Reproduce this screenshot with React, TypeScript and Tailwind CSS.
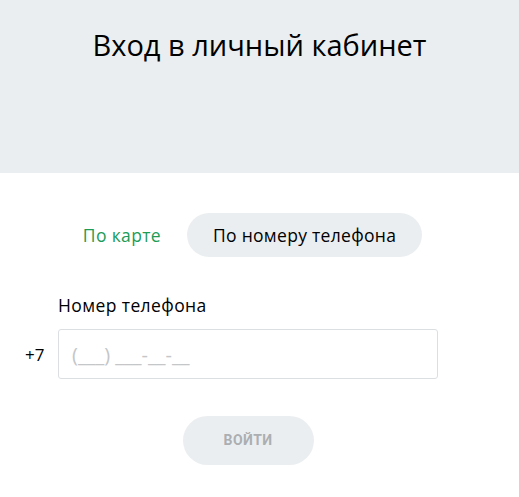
export default function App() {
  return (
    <div className="min-h-[497px] bg-white font-['Open_Sans',sans-serif] text-[#111]">
      {/* Header */}
      <header className="h-[173px] bg-[#ebeef0] pt-[25px] text-center">
        <h1 className="text-[29px] leading-[40px] font-normal text-black">Вход в личный кабинет</h1>
      </header>

      <div className="relative ml-[58px] w-[380px]">
        {/* Tabs */}
        <div className="mt-[40px] flex items-center justify-center gap-[26px] pl-[9px]">
          <button className="text-[17.5px] tracking-[0.35px] text-[#1c9c57]">По карте</button>
          <button className="h-[44px] rounded-full bg-[#ebeef0] px-[26px] text-[17.5px] tracking-[0.3px] text-black">
            По номеру телефона
          </button>
        </div>

        {/* Phone */}
        <label className="mt-[37px] block text-[17.5px] leading-[22px] tracking-[0.4px] text-black">Номер телефона</label>
        <div className="relative mt-[13px]">
          <span className="absolute left-[-33px] top-[13px] text-[17px] text-black">+7</span>
          <input
            type="text"
            placeholder="(___) ___-__-__"
            className="h-[50px] w-full rounded-[3px] border border-[#dcdfe2] px-[13px] text-[20px] outline-none placeholder:text-[#c4c6c8]"
          />
        </div>

        {/* Submit */}
        <div className="mt-[37px] flex justify-center">
          <button
            disabled
            className="h-[49px] w-[131px] rounded-full bg-[#ebeef0] text-[14px] font-bold tracking-[0.4px] text-[#abafb2] font-['Roboto',sans-serif]"
          >
            ВОЙТИ
          </button>
        </div>
      </div>
    </div>
  )
}
